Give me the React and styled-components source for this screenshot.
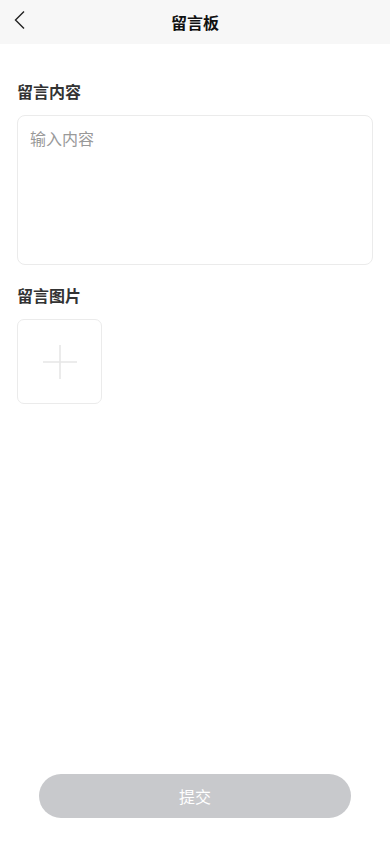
import React, { useState } from "react";
import styled, { createGlobalStyle } from "styled-components";

const GlobalStyle = createGlobalStyle`
  * { box-sizing: border-box; }
  html, body { margin: 0; padding: 0; background: #fff; }
  body {
    font-family: "Noto Sans CJK SC", "Noto Sans", sans-serif;
    color: #333;
  }
`;

const Page = styled.div`
  display: flex;
  flex-direction: column;
  min-height: 100vh;
  background: #fff;
`;

const NavBar = styled.header`
  position: relative;
  display: flex;
  align-items: center;
  justify-content: center;
  height: 44px;
  background: #f7f7f7;
`;

const BackButton = styled.button`
  position: absolute;
  left: 13px;
  top: 10px;
  width: 12px;
  height: 20px;
  display: flex;
  padding: 0;
  border: none;
  background: transparent;
  cursor: pointer;
`;

const NavTitle = styled.h1`
  margin: 0;
  font-size: 16px;
  font-weight: 700;
  color: #111;
  line-height: 22px;
`;

const Content = styled.main`
  flex: 1;
  padding: 36px 17px 0;
`;

const Label = styled.div`
  font-size: 16px;
  font-weight: 700;
  line-height: 22px;
  color: #333;
  margin-top: ${(p) => p.$top || 0}px;
`;

const TextArea = styled.textarea`
  display: block;
  width: 100%;
  height: 150px;
  margin-top: 13px;
  padding: 11px 12px;
  border: 1px solid #ebebeb;
  border-radius: 8px;
  resize: none;
  outline: none;
  font-family: inherit;
  font-size: 16px;
  line-height: 22px;
  color: #333;
  &::placeholder {
    color: #999;
  }
`;

const Uploader = styled.label`
  display: flex;
  align-items: center;
  justify-content: center;
  width: 85px;
  height: 85px;
  margin-top: 13px;
  border: 1px solid #ebebeb;
  border-radius: 7px;
  cursor: pointer;
  input {
    display: none;
  }
`;

const Footer = styled.div`
  display: flex;
  justify-content: center;
  padding: 0 39px 26px;
`;

const SubmitButton = styled.button`
  width: 100%;
  height: 44px;
  border: none;
  border-radius: 22px;
  background: ${(p) => (p.disabled ? "#c8c9cc" : "#07c160")};
  color: #fff;
  font-family: inherit;
  font-size: 16px;
  cursor: ${(p) => (p.disabled ? "not-allowed" : "pointer")};
`;

export default function App() {
  const [text, setText] = useState("");

  return (
    <>
      <GlobalStyle />
      <Page>
        <NavBar>
          <BackButton aria-label="返回">
            <svg width="12" height="20" viewBox="0 0 12 20" fill="none">
              <path d="M11 1.5L2.5 10L11 18.5" stroke="#222" strokeWidth="1.4" />
            </svg>
          </BackButton>
          <NavTitle>留言板</NavTitle>
        </NavBar>
        <Content>
          <Label>留言内容</Label>
          <TextArea
            placeholder="输入内容"
            value={text}
            onChange={(e) => setText(e.target.value)}
          />
          <Label $top={19}>留言图片</Label>
          <Uploader>
            <svg width="34" height="34" viewBox="0 0 34 34">
              <path d="M17 0V34M0 17H34" stroke="#e6e6e6" strokeWidth="1.6" />
            </svg>
            <input type="file" accept="image/*" />
          </Uploader>
        </Content>
        <Footer>
          <SubmitButton disabled={!text.trim()}>提交</SubmitButton>
        </Footer>
      </Page>
    </>
  );
}
